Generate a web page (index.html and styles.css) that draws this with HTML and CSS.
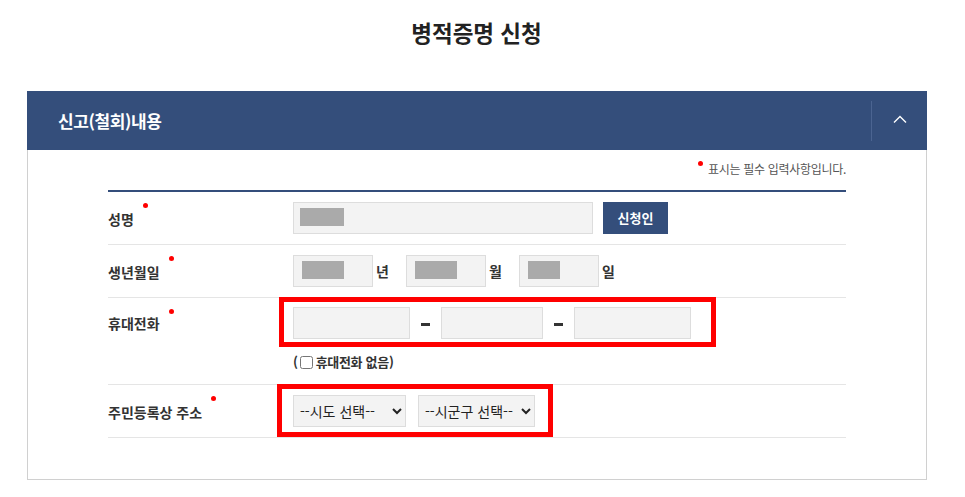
FILE: index.html
```html
<!doctype html>
<html lang="ko">
<head>
  <meta charset="UTF-8">
  <title>병적증명 신청</title>
  <link rel="stylesheet" href="styles.css">
</head>
<body>
  <h2 class="page-title">병적증명 신청</h2>

  <div class="panel">
    <div class="panel-head">
      <h3>신고(철회)내용</h3>
      <a href="javascript:void(0);" class="toggle">
        <svg width="14" height="8" viewBox="0 0 14 8"><path d="M1 7.5L7 1.5L13 7.5" fill="none" stroke="#fff" stroke-width="1.4"/></svg>
      </a>
    </div>
    <div class="panel-body">
      <p class="notice"><span class="req"></span> 표시는 필수 입력사항입니다.</p>

      <div class="form">
        <div class="row">
          <div class="label">성명<span class="req"></span></div>
          <div class="field">
            <div class="input wide"><span class="mask"></span></div>
            <a href="javascript:void(0);" class="btn">신청인</a>
          </div>
        </div>

        <div class="row">
          <div class="label">생년월일<span class="req"></span></div>
          <div class="field">
            <div class="input short"><span class="mask m1"></span></div><span class="unit">년</span>
            <div class="input short"><span class="mask m2"></span></div><span class="unit">월</span>
            <div class="input short"><span class="mask m3"></span></div><span class="unit">일</span>
          </div>
        </div>

        <div class="row tall">
          <div class="label">휴대전화<span class="req"></span></div>
          <div class="field col">
            <div class="phone mark">
              <div class="input p1"></div><span class="dash"></span>
              <div class="input p2"></div><span class="dash"></span>
              <div class="input p3"></div>
            </div>
            <label class="nophone">(<input type="checkbox">휴대전화 없음)</label>
          </div>
        </div>

        <div class="row">
          <div class="label">주민등록상 주소<span class="req"></span></div>
          <div class="field">
            <div class="addr mark">
              <select class="s1"><option>--시도 선택--</option></select>
              <select class="s2"><option>--시군구 선택--</option></select>
            </div>
          </div>
        </div>
      </div>
    </div>
  </div>
</body>
</html>
```

FILE: styles.css
```css
* {
  margin: 0;
  padding: 0;
  box-sizing: border-box;
}
body {
  font-family: "Noto Sans CJK KR", "Noto Sans", sans-serif;
  color: #333;
  background-color: #fff;
}
.page-title {
  text-align: center;
  font-size: 22.5px;
  font-weight: bold;
  color: #222;
  line-height: 30px;
  padding: 17px 12px 0 0;
  height: 91px;
}
.panel {
  width: 900px;
  margin-left: 27px;
  border: 1px solid #d0d0d0;
  border-top: none;
  height: 389px;
}
.panel-head {
  height: 59px;
  margin: 0 -1px;
  background-color: #344e7b;
  display: flex;
  align-items: center;
  justify-content: space-between;
}
.panel-head h3 {
  color: #fff;
  font-size: 17px;
  font-weight: bold;
  padding-left: 31px;
  letter-spacing: -0.4px;
}
.toggle {
  width: 56px;
  height: 40px;
  border-left: 1px solid #4b6491;
  display: flex;
  align-items: center;
  justify-content: center;
  padding-bottom: 3px;
}
.panel-body {
  padding: 9px 80px 0;
}
.notice {
  text-align: right;
  font-size: 12px;
  color: #555;
  line-height: 20px;
  height: 31px;
  letter-spacing: -0.3px;
}
.notice .req {
  margin-right: 2px;
}
.req {
  display: inline-block;
  width: 5px;
  height: 5px;
  border-radius: 50%;
  background-color: #f00;
  vertical-align: top;
  margin-top: 2px;
}
.label .req {
  margin: -6px 0 0 9px;
}
.form {
  border-top: 2px solid #344e7b;
}
.row {
  display: flex;
  align-items: center;
  height: 53px;
  border-bottom: 1px solid #e5e5e5;
}
.row.tall {
  height: 87px;
  align-items: flex-start;
  padding-top: 9px;
}
.label {
  width: 185px;
  font-size: 14px;
  font-weight: bold;
  color: #333;
  padding-top: 2px;
}
.row.tall .label {
  line-height: 32px;
  padding-top: 0;
}
.row.tall .label .req {
  margin-top: 2px;
}
.field {
  display: flex;
  align-items: center;
}
.field.col {
  flex-direction: column;
  align-items: flex-start;
}
.input {
  height: 32px;
  background-color: #f3f3f3;
  border: 1px solid #ddd;
  padding: 5px 6px;
}
.input.wide {
  width: 300px;
}
.input.short {
  width: 80px;
  padding-left: 8px;
}
.mask {
  display: block;
  width: 44px;
  height: 18px;
  background-color: #aaa;
}
.mask.m1 { width: 42px; }
.mask.m2 { width: 42px; }
.mask.m3 { width: 32px; }
.btn {
  margin-left: 10px;
  width: 65px;
  height: 32px;
  line-height: 32px;
  text-align: center;
  background-color: #344e7b;
  color: #fff;
  font-size: 13px;
  font-weight: bold;
  text-decoration: none;
}
.unit {
  font-size: 14px;
  font-weight: bold;
  width: 33px;
  padding-left: 3px;
}
.phone,
.addr {
  display: flex;
  align-items: center;
}
.mark {
  position: relative;
}
.mark::after {
  content: "";
  position: absolute;
  border: 5px solid #f00;
  pointer-events: none;
}
.phone::after {
  left: -14px;
  right: -25px;
  top: -10px;
  bottom: -8px;
}
.addr::after {
  left: -16px;
  right: -18px;
  top: -11px;
  bottom: -10px;
}
.input.p1 { width: 117px; }
.input.p2 { width: 102px; }
.input.p3 { width: 117px; }
.dash {
  width: 9px;
  height: 3px;
  margin: 2px 11px 0 11px;
  background-color: #333;
}
.nophone {
  display: flex;
  align-items: center;
  font-size: 13px;
  font-weight: bold;
  margin-top: 13px;
  letter-spacing: -0.3px;
}
.nophone input {
  width: 13px;
  height: 13px;
  margin: 1px 3px 0 2px;
}
select {
  height: 32px;
  background-color: #f3f3f3;
  border: 1px solid #ddd;
  font-family: "Noto Sans CJK KR", "Noto Sans", sans-serif;
  font-size: 14px;
  color: #222;
  padding: 0 2px;
}
.s1 { width: 113px; }
.s2 { width: 117px; margin-left: 12px; }
```
